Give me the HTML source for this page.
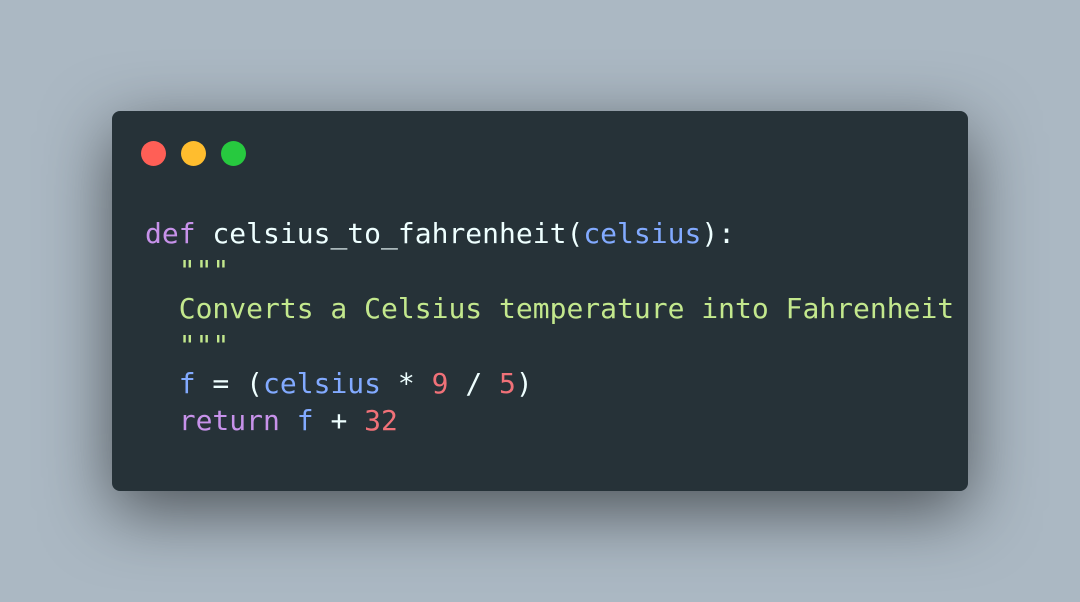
<!DOCTYPE html>
<html><head><meta charset="utf-8"><style>
html,body{margin:0;padding:0;width:1080px;height:602px;overflow:hidden;background:#abb8c3;}
.win{position:absolute;left:112px;top:111px;width:856px;height:380px;background:#263238;border-radius:8px;box-shadow:0 20px 68px rgba(0,0,0,0.55);}
.dot{position:absolute;top:30px;width:25px;height:25px;border-radius:50%;}
pre{position:absolute;left:33px;top:104px;margin:0;font-family:"DejaVu Sans Mono","Liberation Mono",monospace;font-size:28px;line-height:37.4px;color:#eeffff;}
.k{color:#c792ea}.p{color:#82aaff}.s{color:#c3e88d}.n{color:#f07178}
</style></head><body>
<div class="win">
<div class="dot" style="left:29px;background:#ff5f56"></div>
<div class="dot" style="left:69px;background:#ffbd2e"></div>
<div class="dot" style="left:109px;background:#27c93f"></div>
<pre><span class="k">def</span> celsius_to_fahrenheit(<span class="p">celsius</span>):
  <span class="s">"""</span>
  <span class="s">Converts a Celsius temperature into Fahrenheit</span>
  <span class="s">"""</span>
  <span class="p">f</span> = (<span class="p">celsius</span> * <span class="n">9</span> / <span class="n">5</span>)
  <span class="k">return</span> <span class="p">f</span> + <span class="n">32</span></pre>
</div>
</body></html>
